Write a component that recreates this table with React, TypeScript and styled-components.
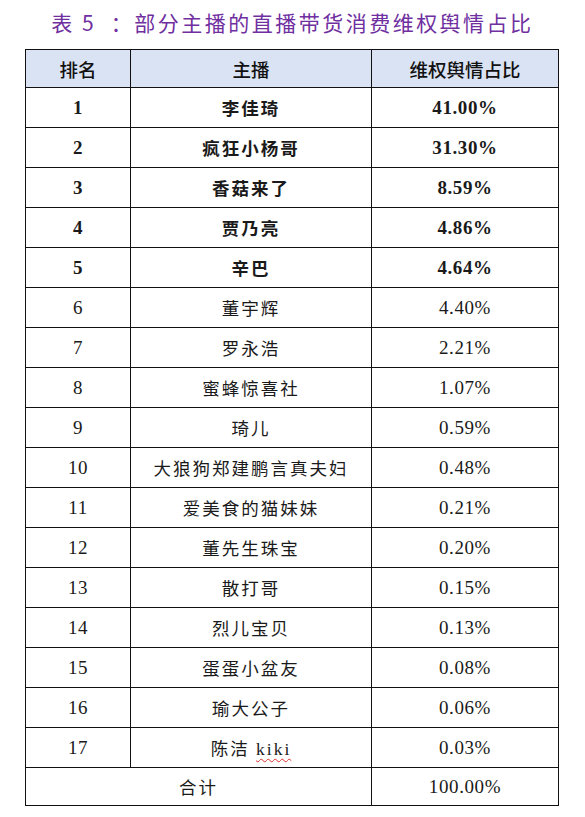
import React from "react";
import styled, { createGlobalStyle } from "styled-components";

const Global = createGlobalStyle`
  html, body { margin: 0; padding: 0; background: #ffffff; }
  body { font-family: "Liberation Serif", "Noto Sans CJK SC", serif; }
`;

const Page = styled.div`
  width: 585px;
  height: 817px;
  background: #fff;
  display: flex;
  flex-direction: column;
  align-items: center;
  padding-top: 8px;
  box-sizing: border-box;
`;

const Title = styled.h1`
  margin: 0 0 12px 0;
  height: 29px;
  line-height: 29px;
  font-family: "Noto Sans CJK SC", sans-serif;
  font-weight: 400;
  font-size: 21px;
  letter-spacing: 2.5px;
  color: #6f2f9f;
  white-space: pre;
`;

const Table = styled.table`
  border-collapse: collapse;
  width: 533px;
  margin-left: -1px;
  table-layout: fixed;
  border: 1.5px solid #111;
`;

const HeadCell = styled.th`
  height: 37px;
  padding: 0;
  background: #dae3f3;
  border: 1px solid #111;
  font-family: "Noto Sans CJK SC", sans-serif;
  font-weight: 500;
  font-size: 18.5px;
  color: #111;
  text-align: center;
  vertical-align: middle;
`;

const Cell = styled.td<{ $bold?: boolean; $cjk?: boolean; $short?: boolean }>`
  height: ${(p) => (p.$short ? "37px" : "39px")};
  padding: 0;
  border: 1px solid #111;
  text-align: center;
  vertical-align: middle;
  color: #1a1a1a;
  font-family: ${(p) =>
    p.$cjk
      ? `"Liberation Serif", "Noto Sans CJK SC", serif`
      : `"Liberation Serif", serif`};
  font-size: ${(p) => (p.$cjk ? "17.5px" : "19px")};
  letter-spacing: ${(p) => (p.$cjk ? "2px" : "0.6px")};
  font-weight: ${(p) => (p.$bold ? 700 : 400)};
`;

const Misspelled = styled.span`
  text-decoration: underline wavy #e03030;
  text-decoration-thickness: 1px;
  text-underline-offset: 3px;
`;

type Row = { rank: number; name: string; share: string };

const rows: Row[] = [
  { rank: 1, name: "李佳琦", share: "41.00%" },
  { rank: 2, name: "疯狂小杨哥", share: "31.30%" },
  { rank: 3, name: "香菇来了", share: "8.59%" },
  { rank: 4, name: "贾乃亮", share: "4.86%" },
  { rank: 5, name: "辛巴", share: "4.64%" },
  { rank: 6, name: "董宇辉", share: "4.40%" },
  { rank: 7, name: "罗永浩", share: "2.21%" },
  { rank: 8, name: "蜜蜂惊喜社", share: "1.07%" },
  { rank: 9, name: "琦儿", share: "0.59%" },
  { rank: 10, name: "大狼狗郑建鹏言真夫妇", share: "0.48%" },
  { rank: 11, name: "爱美食的猫妹妹", share: "0.21%" },
  { rank: 12, name: "董先生珠宝", share: "0.20%" },
  { rank: 13, name: "散打哥", share: "0.15%" },
  { rank: 14, name: "烈儿宝贝", share: "0.13%" },
  { rank: 15, name: "蛋蛋小盆友", share: "0.08%" },
  { rank: 16, name: "瑜大公子", share: "0.06%" },
  { rank: 17, name: "陈洁 kiki", share: "0.03%" },
];

function renderName(name: string) {
  if (name === "陈洁 kiki") {
    return (
      <>
        陈洁 <Misspelled>kiki</Misspelled>
      </>
    );
  }
  return name;
}

export default function App() {
  return (
    <>
      <Global />
      <Page>
        <Title>{"表 5  ：部分主播的直播带货消费维权舆情占比"}</Title>
        <Table>
          <colgroup>
            <col style={{ width: 105 }} />
            <col style={{ width: 241 }} />
            <col style={{ width: 187 }} />
          </colgroup>
          <thead>
            <tr>
              <HeadCell>排名</HeadCell>
              <HeadCell>主播</HeadCell>
              <HeadCell>维权舆情占比</HeadCell>
            </tr>
          </thead>
          <tbody>
            {rows.map((r) => {
              const bold = r.rank <= 5;
              return (
                <tr key={r.rank}>
                  <Cell $bold={bold}>{r.rank}</Cell>
                  <Cell $bold={bold} $cjk>
                    {renderName(r.name)}
                  </Cell>
                  <Cell $bold={bold}>{r.share}</Cell>
                </tr>
              );
            })}
            <tr>
              <Cell colSpan={2} $cjk $short>
                合计
              </Cell>
              <Cell $short>100.00%</Cell>
            </tr>
          </tbody>
        </Table>
      </Page>
    </>
  );
}
